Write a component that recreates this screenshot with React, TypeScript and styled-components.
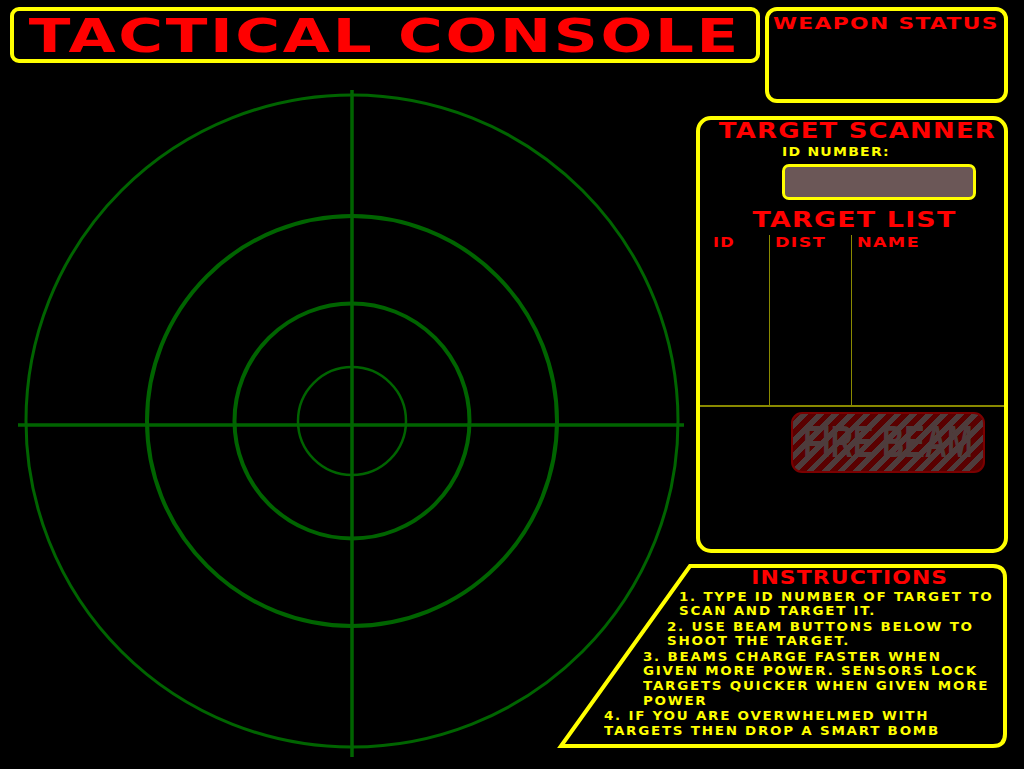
import React from "react";
import styled, { createGlobalStyle } from "styled-components";

const YELLOW = "#ffff00";
const RED = "#ff0000";
const GREEN = "#006400";
const OLIVE = "#8a8a00";
const WIDE = `"DejaVu Sans", "Liberation Sans", sans-serif`;

const Global = createGlobalStyle`
  html, body {
    margin: 0;
    padding: 0;
    background: #000;
  }
  body {
    width: 1024px;
    height: 769px;
    overflow: hidden;
    font-family: ${WIDE};
  }
`;

const Console = styled.main`
  width: 1024px;
  height: 769px;
  display: grid;
  grid-template-columns: 10px 548px 138px 69px 243px 16px;
  grid-template-rows: 7px 56px 40px 13px 437px 11px 184px 21px;
  overflow: hidden;
`;

const Stretch = styled.span<{ $scale: number; $origin?: string }>`
  display: inline-block;
  white-space: nowrap;
  transform: scaleX(${(p) => p.$scale});
  transform-origin: ${(p) => p.$origin ?? "center"};
`;

const TitleBar = styled.header`
  grid-column: 2 / 5;
  grid-row: 2 / 3;
  margin-right: 5px;
  border: 4px solid ${YELLOW};
  border-radius: 9px;
  display: flex;
  align-items: center;
  justify-content: center;
  overflow: hidden;
`;

const TitleText = styled.h1`
  margin: 0;
  color: ${RED};
  font-family: ${WIDE};
  font-weight: bold;
  font-size: 47px;
  line-height: 1;
  letter-spacing: 2px;
`;

const WeaponPanel = styled.section`
  grid-column: 5 / 6;
  grid-row: 2 / 4;
  border: 4px solid ${YELLOW};
  border-radius: 12px;
  padding: 5px 4px;
`;

const PanelHeading = styled.h2<{ $size: number; $align?: string }>`
  margin: 0;
  color: ${RED};
  font-family: ${WIDE};
  font-weight: bold;
  font-size: ${(p) => p.$size}px;
  line-height: 1;
  letter-spacing: 1px;
  text-align: ${(p) => p.$align ?? "center"};
`;

const RadarArea = styled.div`
  grid-column: 2 / 4;
  grid-row: 3 / 9;
`;

const RadarSvg = styled.svg`
  display: block;
  overflow: visible;
`;

const Scanner = styled.section`
  grid-column: 4 / 6;
  grid-row: 5 / 6;
  border: 4px solid ${YELLOW};
  border-radius: 15px;
  display: flex;
  flex-direction: column;
`;

const ScannerTitle = styled(PanelHeading)`
  padding-left: 10px;
`;

const IdLabel = styled.label`
  display: block;
  margin: 5px 0 0 82px;
  color: ${YELLOW};
  font-weight: bold;
  font-size: 11.5px;
  line-height: 1;
  letter-spacing: 1px;
`;

const IdInput = styled.input`
  box-sizing: border-box;
  margin: 5px 0 0 82px;
  width: 194px;
  height: 36px;
  border: 3px solid ${YELLOW};
  border-radius: 7px;
  background: #6b5757;
  outline: none;
  color: ${YELLOW};
`;

const ListTitle = styled(PanelHeading)`
  margin-top: 9px;
  padding-left: 6px;
`;

const TargetTable = styled.div`
  margin-top: 4px;
  height: 170px;
  border-bottom: 2px solid ${OLIVE};
  display: grid;
  grid-template-columns: 69px 82px 1fr;
`;

const Column = styled.div<{ $divider?: boolean; $pad: number }>`
  border-left: ${(p) => (p.$divider ? `1px solid ${OLIVE}` : "none")};
  padding-left: ${(p) => p.$pad}px;
`;

const ColHead = styled.div`
  color: ${RED};
  font-weight: bold;
  font-size: 13.5px;
  line-height: 1;
  letter-spacing: 1px;
  padding-top: 1px;
`;

const FireButton = styled.button`
  box-sizing: border-box;
  margin: 5px 0 0 91px;
  width: 194px;
  height: 61px;
  border: 2px solid #7a0000;
  border-radius: 11px;
  background: repeating-linear-gradient(
    135deg,
    #5a0000 0px,
    #5a0000 5.5px,
    #4e3c3c 5.5px,
    #4e3c3c 11px
  );
  color: #4e3c3c;
  font-family: "Liberation Sans", Arial, sans-serif;
  font-weight: bold;
  font-size: 44px;
  line-height: 1;
  padding: 0;
  display: flex;
  align-items: center;
  justify-content: center;
  cursor: not-allowed;
`;

const FireLabel = styled(Stretch)`
  margin: 0 -40px;
`;

const Instructions = styled.section`
  grid-column: 3 / 6;
  grid-row: 7 / 8;
  position: relative;
  padding-top: 4px;
`;

const Frame = styled.svg`
  position: absolute;
  left: 0;
  top: 0;
  overflow: visible;
`;

const InstrHeading = styled(PanelHeading)`
  position: relative;
  padding-left: 134px;
  font-size: 19px;
`;

const Steps = styled.ol`
  position: relative;
  list-style: none;
  margin: 2.5px 0 0;
  padding: 0;
`;

const Step = styled.li<{ $indent: number }>`
  margin: 0 0 1px ${(p) => p.$indent}px;
  color: ${YELLOW};
  font-weight: bold;
  font-size: 11.5px;
  line-height: 14.6px;
  letter-spacing: 1.5px;
`;

const StepLine = styled(Stretch)`
  display: block;
  width: fit-content;
`;

const steps: { indent: number; lines: string[] }[] = [
  { indent: 121, lines: ["1. TYPE ID NUMBER OF TARGET TO", "SCAN AND TARGET IT."] },
  { indent: 109, lines: ["2. USE BEAM BUTTONS BELOW TO", "SHOOT THE TARGET."] },
  {
    indent: 85,
    lines: [
      "3. BEAMS CHARGE FASTER WHEN",
      "GIVEN MORE POWER. SENSORS LOCK",
      "TARGETS QUICKER WHEN GIVEN MORE",
      "POWER",
    ],
  },
  { indent: 46, lines: ["4. IF YOU ARE OVERWHELMED WITH", "TARGETS THEN DROP A SMART BOMB"] },
];

function Radar() {
  const cx = 342;
  const cy = 358;
  const rings = [
    { r: 326, w: 3 },
    { r: 205, w: 4 },
    { r: 117.5, w: 4 },
    { r: 54, w: 2.5 },
  ];
  return (
    <RadarSvg width={686} height={706} viewBox="0 0 686 706">
      {rings.map((ring) => (
        <circle key={ring.r} cx={cx} cy={cy} r={ring.r} fill="none" stroke={GREEN} strokeWidth={ring.w} />
      ))}
      <line x1={8} y1={362} x2={674} y2={362} stroke={GREEN} strokeWidth={3.5} />
      <line x1={342} y1={27} x2={342} y2={694} stroke={GREEN} strokeWidth={3.5} />
    </RadarSvg>
  );
}

export default function App() {
  return (
    <>
      <Global />
      <Console>
        <TitleBar>
          <TitleText>
            <Stretch $scale={1.3}>TACTICAL CONSOLE</Stretch>
          </TitleText>
        </TitleBar>

        <WeaponPanel>
          <PanelHeading $size={16} $align="left">
            <Stretch $scale={1.36} $origin="left">WEAPON STATUS</Stretch>
          </PanelHeading>
        </WeaponPanel>

        <RadarArea>
          <Radar />
        </RadarArea>

        <Scanner>
          <ScannerTitle $size={22}>
            <Stretch $scale={1.18}>TARGET SCANNER</Stretch>
          </ScannerTitle>
          <IdLabel htmlFor="target-id">
            <Stretch $scale={1.22} $origin="left">ID NUMBER:</Stretch>
          </IdLabel>
          <IdInput id="target-id" type="text" />
          <ListTitle $size={22}>
            <Stretch $scale={1.22}>TARGET LIST</Stretch>
          </ListTitle>
          <TargetTable>
            <Column $pad={13}>
              <ColHead>
                <Stretch $scale={1.2} $origin="left">ID</Stretch>
              </ColHead>
            </Column>
            <Column $divider $pad={5}>
              <ColHead>
                <Stretch $scale={1.3} $origin="left">DIST</Stretch>
              </ColHead>
            </Column>
            <Column $divider $pad={5}>
              <ColHead>
                <Stretch $scale={1.3} $origin="left">NAME</Stretch>
              </ColHead>
            </Column>
          </TargetTable>
          <FireButton disabled>
            <FireLabel $scale={0.7}>FIRE BEAM</FireLabel>
          </FireButton>
        </Scanner>

        <Instructions>
          <Frame width={450} height={184} viewBox="0 0 450 184">
            <path
              d="M 132 2 L 435 2 Q 447 2 447 14 L 447 170 Q 447 182 435 182 L 3 182 Z"
              fill="none"
              stroke={YELLOW}
              strokeWidth={4}
            />
          </Frame>
          <InstrHeading $size={19}>
            <Stretch $scale={1.15}>INSTRUCTIONS</Stretch>
          </InstrHeading>
          <Steps>
            {steps.map((s) => (
              <Step key={s.lines[0]} $indent={s.indent}>
                {s.lines.map((l) => (
                  <StepLine key={l} $scale={1.17} $origin="left">
                    {l}
                  </StepLine>
                ))}
              </Step>
            ))}
          </Steps>
        </Instructions>
      </Console>
    </>
  );
}
